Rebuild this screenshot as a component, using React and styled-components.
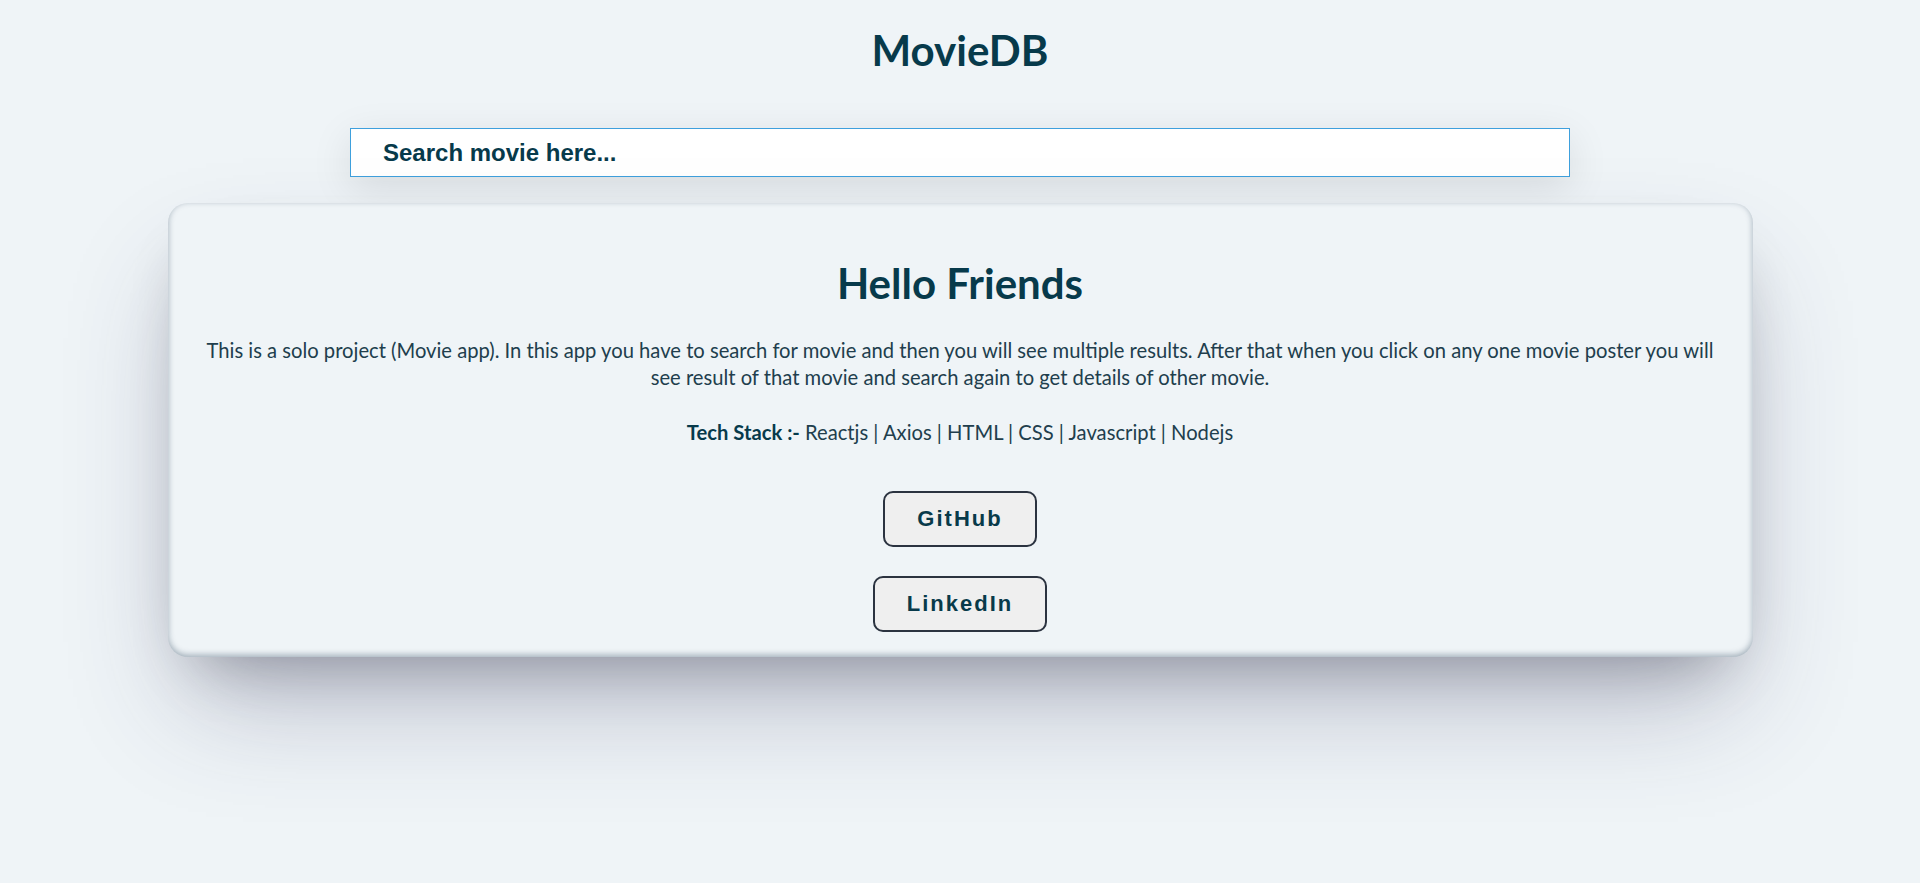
import React from "react";
import styled, { createGlobalStyle } from "styled-components";

const GlobalStyle = createGlobalStyle`
  html, body {
    margin: 0;
    padding: 0;
    background: #eff4f7;
    font-family: Lato, "Noto Sans", sans-serif;
  }
  * { box-sizing: border-box; }
`;

const Page = styled.div`
  min-height: 100vh;
  display: flex;
  flex-direction: column;
  align-items: center;
  padding-top: 25px;
  background: #eff4f7;
`;

const Title = styled.h1`
  margin: 0;
  font-size: 42px;
  line-height: 50px;
  font-weight: 700;
  color: #073a4b;
`;

const SearchInput = styled.input`
  margin-top: 53px;
  width: 1220px;
  height: 49px;
  padding: 0 32px;
  border: 1px solid #3ea0dd;
  background: #ffffff;
  outline: none;
  font-family: "Liberation Sans", Arial, sans-serif;
  font-weight: 700;
  font-size: 24px;
  color: #073a4b;
  box-shadow: rgba(0, 0, 0, 0.1) 0px 10px 40px;

  &::placeholder {
    color: #073a4b;
    opacity: 1;
  }
`;

const Card = styled.section`
  margin-top: 26px;
  width: 1585px;
  padding: 54px 26px 25px;
  border-radius: 20px;
  background: #eff4f7;
  display: flex;
  flex-direction: column;
  align-items: center;
  text-align: center;
  box-shadow: rgba(50, 50, 93, 0.3) 0px 60px 110px -20px,
    rgba(0, 0, 0, 0.32) 0px 30px 60px -30px,
    rgba(10, 37, 64, 0.35) 0px -2px 6px 0px inset;
`;

const Heading = styled.h2`
  margin: 0;
  font-size: 42px;
  line-height: 52px;
  font-weight: 700;
  color: #073a4b;
`;

const Text = styled.p`
  margin: 28px 0 0;
  font-size: 20.2px;
  line-height: 27px;
  color: #213e4d;
`;

const Strong = styled.strong`
  font-weight: 700;
  color: #073a4b;
`;

const ButtonStack = styled.div`
  margin-top: 45px;
  display: flex;
  flex-direction: column;
  align-items: center;
  gap: 29px;
`;

const LinkButton = styled.button`
  padding: 13px 32px;
  line-height: 26px;
  border: 2px solid #2b3340;
  border-radius: 10px;
  background: #efefef;
  color: #083a4a;
  font-family: "Liberation Sans", Arial, sans-serif;
  font-weight: 700;
  font-size: 22px;
  letter-spacing: 2px;
  cursor: pointer;
`;

export default function App() {
  return (
    <>
      <GlobalStyle />
      <Page>
        <Title>MovieDB</Title>
        <SearchInput type="text" placeholder="Search movie here..." />
        <Card>
          <Heading>Hello Friends</Heading>
          <Text>
            This is a solo project (Movie app). In this app you have to search for movie and then you will see multiple results. After that when you click on any one movie poster you will see result of that movie and search again to get details of other movie.
          </Text>
          <Text>
            <Strong>Tech Stack :-</Strong> Reactjs | Axios | HTML | CSS | Javascript | Nodejs
          </Text>
          <ButtonStack>
            <LinkButton>GitHub</LinkButton>
            <LinkButton>LinkedIn</LinkButton>
          </ButtonStack>
        </Card>
      </Page>
    </>
  );
}
